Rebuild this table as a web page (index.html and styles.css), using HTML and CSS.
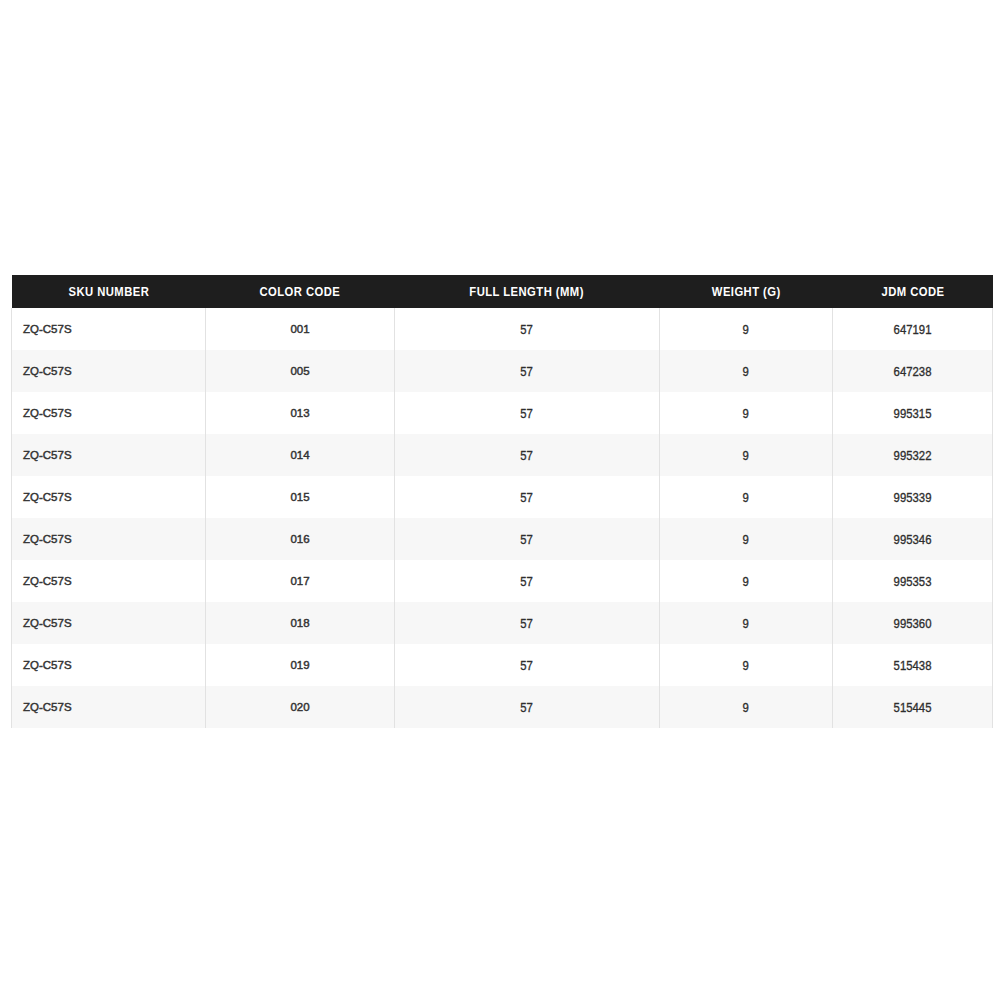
FILE: index.html
```html
<!DOCTYPE html>
<html>
<head>
<meta charset="utf-8">
<link rel="stylesheet" href="styles.css">
</head>
<body>
<div class="page">
  <table class="spec">
    <thead>
      <tr>
        <th class="c1"><span class="hn">SKU NUMBER</span></th>
        <th class="c2"><span class="hn">COLOR CODE</span></th>
        <th class="c3"><span class="hn">FULL LENGTH (MM)</span></th>
        <th class="c4"><span class="hn">WEIGHT (G)</span></th>
        <th class="c5"><span class="hn">JDM CODE</span></th>
      </tr>
    </thead>
    <tbody>
      <tr><td class="sku">ZQ-C57S</td><td class="code">001</td><td><span class="cn">57</span></td><td><span class="cn">9</span></td><td><span class="cn">647191</span></td></tr>
      <tr><td class="sku">ZQ-C57S</td><td class="code">005</td><td><span class="cn">57</span></td><td><span class="cn">9</span></td><td><span class="cn">647238</span></td></tr>
      <tr><td class="sku">ZQ-C57S</td><td class="code">013</td><td><span class="cn">57</span></td><td><span class="cn">9</span></td><td><span class="cn">995315</span></td></tr>
      <tr><td class="sku">ZQ-C57S</td><td class="code">014</td><td><span class="cn">57</span></td><td><span class="cn">9</span></td><td><span class="cn">995322</span></td></tr>
      <tr><td class="sku">ZQ-C57S</td><td class="code">015</td><td><span class="cn">57</span></td><td><span class="cn">9</span></td><td><span class="cn">995339</span></td></tr>
      <tr><td class="sku">ZQ-C57S</td><td class="code">016</td><td><span class="cn">57</span></td><td><span class="cn">9</span></td><td><span class="cn">995346</span></td></tr>
      <tr><td class="sku">ZQ-C57S</td><td class="code">017</td><td><span class="cn">57</span></td><td><span class="cn">9</span></td><td><span class="cn">995353</span></td></tr>
      <tr><td class="sku">ZQ-C57S</td><td class="code">018</td><td><span class="cn">57</span></td><td><span class="cn">9</span></td><td><span class="cn">995360</span></td></tr>
      <tr><td class="sku">ZQ-C57S</td><td class="code">019</td><td><span class="cn">57</span></td><td><span class="cn">9</span></td><td><span class="cn">515438</span></td></tr>
      <tr><td class="sku">ZQ-C57S</td><td class="code">020</td><td><span class="cn">57</span></td><td><span class="cn">9</span></td><td><span class="cn">515445</span></td></tr>
    </tbody>
  </table>
</div>
</body>
</html>
```
FILE: styles.css
```css
html, body {
  margin: 0;
  padding: 0;
  background: #ffffff;
}
.page {
  padding: 275px 0 0 11px;
}
.spec {
  width: 981px;
  border-collapse: collapse;
  table-layout: fixed;
  font-family: "Liberation Sans", Arial, sans-serif;
}
.spec th {
  background: #1e1e1e;
  color: #ffffff;
  height: 33px;
  padding: 0;
  font-size: 12.5px;
  font-weight: bold;
  letter-spacing: 0.5px;
  text-align: center;
  vertical-align: middle;
}
.hn {
  display: inline-block;
  transform: scaleX(0.9);
}
.c1 { width: 194px; }
.c2 { width: 189px; }
.c3 { width: 265px; }
.c4 { width: 173px; }
.c5 { width: 160px; }
.spec td {
  height: 42px;
  padding: 0;
  text-align: center;
  vertical-align: middle;
  font-size: 13.5px;
  color: #2e2e2e;
  border-left: 1px solid #e2e2e2;
  border-right: 1px solid #e2e2e2;
}
.cn {
  display: inline-block;
  transform: scaleX(0.84);
  -webkit-text-stroke: 0.35px #2e2e2e;
}
.spec tbody tr:nth-child(even) td {
  background: #f7f7f7;
}
.spec td.sku,
.spec td.code {
  font-size: 11.5px;
  font-weight: normal;
  color: #333333;
  -webkit-text-stroke: 0.45px #333333;
}
.spec td.sku {
  text-align: left;
  padding-left: 11px;
}
```
